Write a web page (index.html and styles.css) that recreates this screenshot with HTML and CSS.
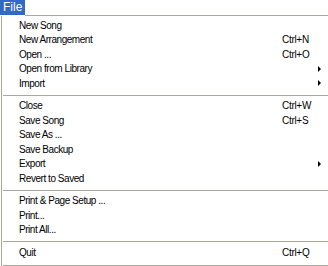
FILE: index.html
```html
<!DOCTYPE html>
<html lang="en">

<head>
    <meta charset="UTF-8">
    <meta name="viewport" content="width=device-width, initial-scale=1.0">
    <title>File menu</title>
    <link rel="stylesheet" href="styles.css">
</head>

<body>
    <div class="bar">
        <span class="tab">File</span>
        <span class="rest"></span>
    </div>
    <div class="menu">
        <div class="item"><span class="label">New Song</span></div>
        <div class="item"><span class="label">New Arrangement</span><span class="key">Ctrl+N</span></div>
        <div class="item"><span class="label">Open ...</span><span class="key">Ctrl+O</span></div>
        <div class="item"><span class="label">Open from Library</span><span class="arrow"></span></div>
        <div class="item"><span class="label">Import</span><span class="arrow"></span></div>
        <div class="sep"></div>
        <div class="item"><span class="label">Close</span><span class="key">Ctrl+W</span></div>
        <div class="item"><span class="label">Save Song</span><span class="key">Ctrl+S</span></div>
        <div class="item"><span class="label">Save As ...</span></div>
        <div class="item"><span class="label">Save Backup</span></div>
        <div class="item"><span class="label">Export</span><span class="arrow"></span></div>
        <div class="item"><span class="label">Revert to Saved</span></div>
        <div class="sep"></div>
        <div class="item"><span class="label">Print &amp; Page Setup ...</span></div>
        <div class="item"><span class="label">Print...</span></div>
        <div class="item"><span class="label">Print All...</span></div>
        <div class="sep"></div>
        <div class="item"><span class="label">Quit</span><span class="key">Ctrl+Q</span></div>
        <div class="sep"></div>
    </div>
</body>

</html>
```

FILE: styles.css
```css
* {
    margin: 0;
    padding: 0;
    box-sizing: border-box;
}

body {
    background-color: #fff;
    font-family: "Liberation Sans", Arial, sans-serif;
    font-size: 10px;
    color: #000;
    overflow: hidden;
}

.bar {
    display: flex;
    height: 16px;
}

.tab {
    display: block;
    width: 25px;
    height: 16px;
    padding-left: 3px;
    line-height: 15px;
    font-size: 12px;
    color: #fff;
    background-color: #316ac5;
    border-bottom: 1px solid #fff;
}

.rest {
    flex: 1;
    border-bottom: 1px solid #aca899;
}

.menu {
    margin-left: 1px;
    padding-top: 2px;
    border-left: 1px solid #aca899;
}

.item {
    display: flex;
    align-items: center;
    height: 14.5px;
    padding-left: 17px;
}

.label {
    flex: 1;
    letter-spacing: -0.45px;
}

.key {
    width: 46px;
    letter-spacing: -0.3px;
}

.arrow {
    display: block;
    width: 0;
    height: 0;
    margin-right: 7px;
    border-left: 3px solid #000;
    border-top: 3px solid transparent;
    border-bottom: 3px solid transparent;
}

.sep {
    height: 1px;
    margin: 4px 0 3px 1px;
    background-color: #aca899;
}

.sep:last-child {
    margin-top: 5px;
}
```
